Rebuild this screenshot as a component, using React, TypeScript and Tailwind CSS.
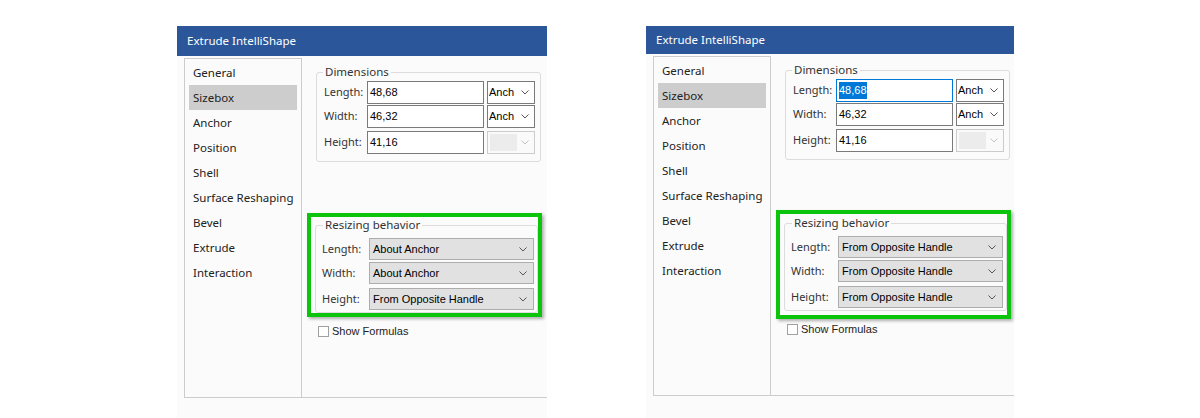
import React from "react";

const Chevron = ({ color = "#606060" }: { color?: string }) => (
  <svg width="8" height="5" viewBox="0 0 8 5" className="shrink-0">
    <path d="M0.5 0.5 L4 4 L7.5 0.5" fill="none" stroke={color} strokeWidth="1" />
  </svg>
);

const navItems = [
  "General",
  "Sizebox",
  "Anchor",
  "Position",
  "Shell",
  "Surface Reshaping",
  "Bevel",
  "Extrude",
  "Interaction",
];

type PanelProps = {
  panelClass: string;
  titleClass: string;
  greenClass: string;
  checkClass: string;
  focus: boolean;
  behaviors: string[];
};

function DimRow({
  label,
  value,
  focus,
  select,
  rowClass,
}: {
  label: string;
  value: string;
  focus?: boolean;
  select: "anch" | "disabled";
  rowClass: string;
}) {
  return (
    <div className={"flex items-center h-[23px] " + rowClass}>
      <div className="w-[43px] text-[11px] text-[#333] whitespace-nowrap font-['Noto_Sans',sans-serif]">{label}</div>
      {focus ? (
        <div className="w-[117px] h-[23px] border border-[#0078d7] bg-white flex items-center pl-[2px]">
          <span className="bg-[#0078d7] text-white text-[11px] leading-[17px] font-['Liberation_Sans',Arial,sans-serif]">
            {value}
          </span>
        </div>
      ) : (
        <div className="w-[117px] h-[23px] border border-[#7a7a7a] bg-white flex items-center pl-[2px] text-[11px] text-black font-['Liberation_Sans',Arial,sans-serif]">
          {value}
        </div>
      )}
      {select === "anch" ? (
        <div className="ml-[3px] w-[48px] h-[23px] border border-[#7a7a7a] bg-white flex items-center justify-between pl-[1px] pr-[5px] text-[11px] text-black font-['Liberation_Sans',Arial,sans-serif]">
          <span>Anch</span>
          <Chevron color="#555" />
        </div>
      ) : (
        <div className="ml-[3px] w-[48px] h-[23px] border border-[#cccccc] bg-[#fafafa] flex items-center justify-between pl-[2px] pr-[5px]">
          <div className="w-[27px] h-[17px] bg-[#ececec]" />
          <Chevron color="#c4c4c4" />
        </div>
      )}
    </div>
  );
}

function BehRow({ label, value, rowClass }: { label: string; value: string; rowClass: string }) {
  return (
    <div className={"flex items-center h-[22px] " + rowClass}>
      <div className="w-[47px] text-[11px] text-[#333] whitespace-nowrap font-['Noto_Sans',sans-serif]">{label}</div>
      <div className="w-[165px] h-[22px] border border-[#adadad] bg-[#e1e1e1] flex items-center justify-between pl-[3px] pr-[6px] text-[11px] text-black font-['Liberation_Sans',Arial,sans-serif]">
        <span>{value}</span>
        <Chevron color="#555" />
      </div>
    </div>
  );
}

function Panel({ panelClass, titleClass, greenClass, checkClass, focus, behaviors }: PanelProps) {
  return (
    <div className={"mt-[26px] h-[392px] bg-[#fbfbfb] flex flex-col " + panelClass}>
      <div
        className={
          "bg-[#2b579a] text-white text-[11.5px] flex items-center pl-[10px] whitespace-nowrap font-['Noto_Sans',sans-serif] " +
          titleClass
        }
      >
        Extrude IntelliShape
      </div>
      <div className="pl-[7px] pt-[2px]">
        <div className="flex h-[340px] border-b border-[#cccccc]">
          {/* nav */}
          <div className="w-[118px] shrink-0 border-l border-t border-r border-[#cccccc] px-[4px] pt-[1px]">
            {navItems.map((n) => (
              <div
                key={n}
                className={
                  "h-[25px] flex items-center px-[4px] text-[11.5px] text-[#222] whitespace-nowrap font-['Noto_Sans',sans-serif] " +
                  (n === "Sizebox" ? "bg-[#cdcdcd]" : "")
                }
              >
                {n}
              </div>
            ))}
          </div>
          {/* content */}
          <div className="flex-1 flex flex-col">
            <fieldset className="ml-[14px] mt-[7px] w-[225px] border border-[#dcdcdc] rounded-[3px] pl-[7px] pt-[2px] pb-[7px]">
              <legend className="-ml-[1px] px-[2px] text-[11.5px] leading-[14px] text-[#333] font-['Noto_Sans',sans-serif]">
                Dimensions
              </legend>
              <DimRow label="Length:" value="48,68" focus={focus} select="anch" rowClass="" />
              <DimRow label="Width:" value="46,32" select="anch" rowClass="mt-[1px]" />
              <DimRow label="Height:" value="41,16" select="disabled" rowClass="mt-[3px]" />
            </fieldset>
            <div
              className={
                "ml-[5px] w-[235px] border-4 border-[#0cc40c] shadow-[2px_2px_3px_rgba(0,0,0,0.3)] pl-[4px] " +
                greenClass
              }
            >
              <fieldset className="w-[223px] border border-[#dcdcdc] rounded-[3px] pl-[6px] pt-[6px] pb-[2px]">
                <legend className="ml-[1px] px-[2px] text-[11.5px] leading-[14px] text-[#333] font-['Noto_Sans',sans-serif]">
                  Resizing behavior
                </legend>
                <BehRow label="Length:" value={behaviors[0]} rowClass="" />
                <BehRow label="Width:" value={behaviors[1]} rowClass="mt-[2px]" />
                <BehRow label="Height:" value={behaviors[2]} rowClass="mt-[4px]" />
              </fieldset>
            </div>
            <div className={"ml-[16px] flex items-center " + checkClass}>
              <div className="w-[11px] h-[11px] border border-[#a0a0a0] bg-white" />
              <span className="ml-[3px] text-[11px] text-[#222] font-['Liberation_Sans',Arial,sans-serif]">
                Show Formulas
              </span>
            </div>
          </div>
        </div>
      </div>
    </div>
  );
}

export default function App() {
  return (
    <div className="w-[1200px] h-[418px] bg-white flex items-start pl-[177px] overflow-hidden">
      <Panel
        panelClass="w-[370px]"
        titleClass="h-[30px]"
        greenClass="mt-[51px] pt-[1px] pb-0"
        checkClass="mt-[6px]"
        focus={false}
        behaviors={["About Anchor", "About Anchor", "From Opposite Handle"]}
      />
      <div className="w-[99px] shrink-0" />
      <Panel
        panelClass="w-[368px]"
        titleClass="h-[28px]"
        greenClass="mt-[50px] pt-[2px] pb-[4px]"
        checkClass="mt-[2px]"
        focus={true}
        behaviors={["From Opposite Handle", "From Opposite Handle", "From Opposite Handle"]}
      />
    </div>
  );
}
